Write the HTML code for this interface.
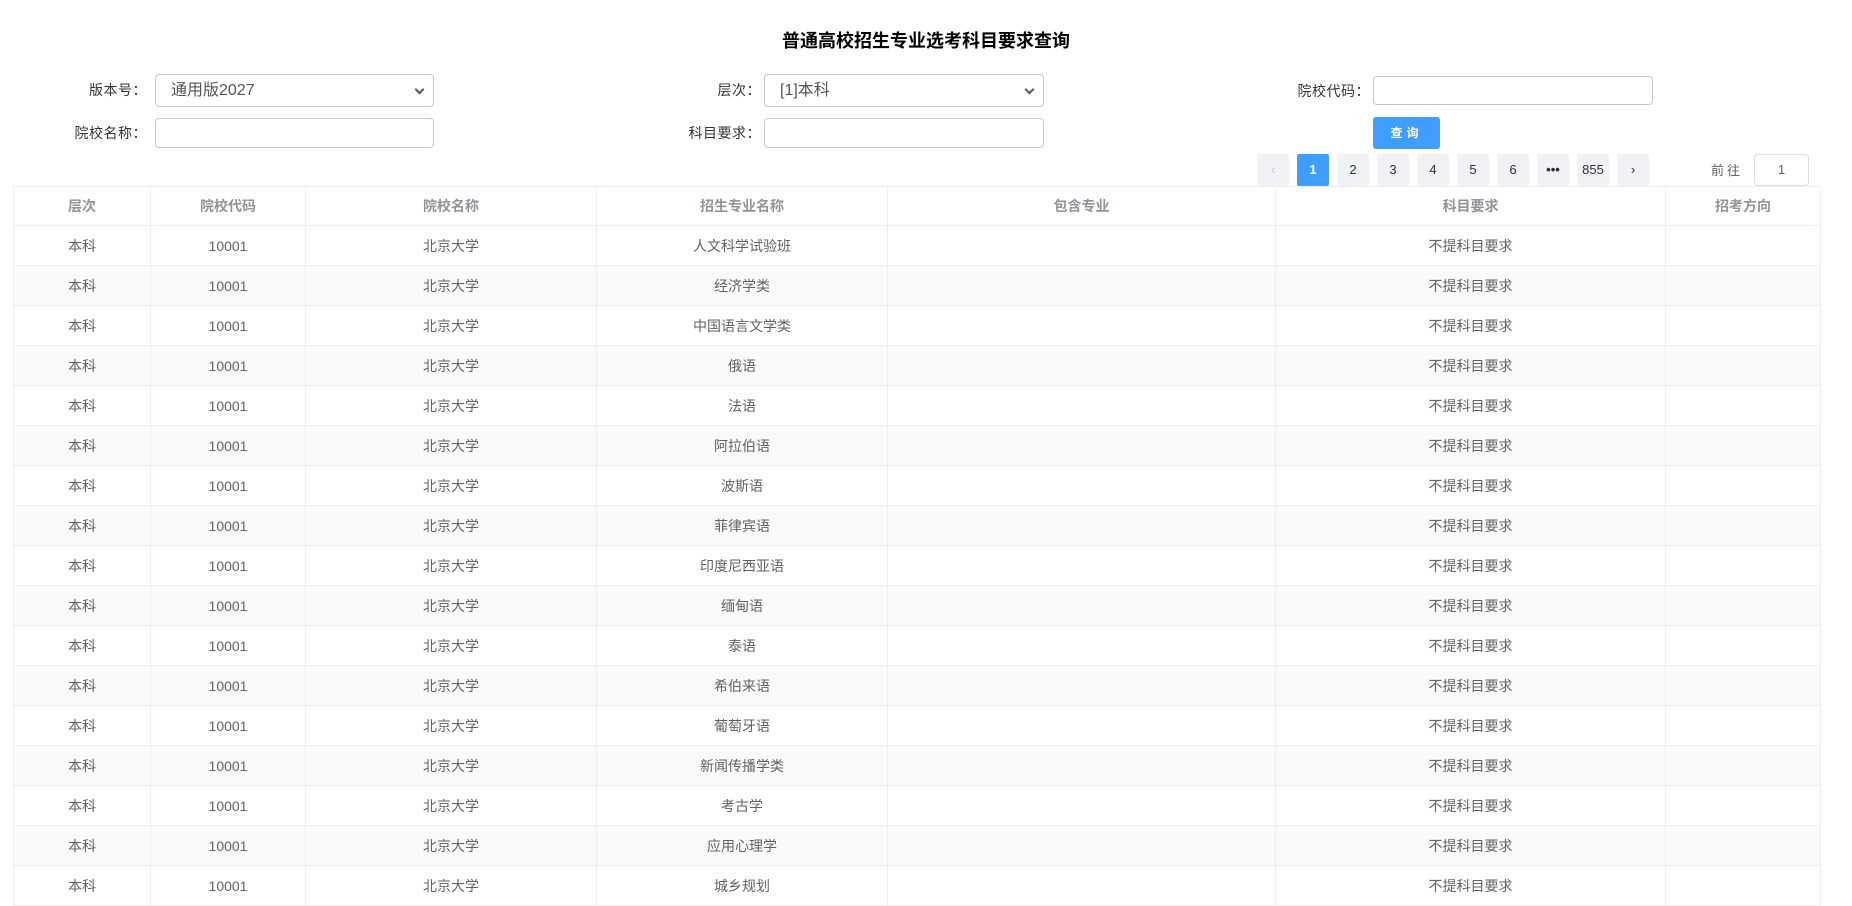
<!DOCTYPE html>
<html><head><meta charset="utf-8"><style>
*{box-sizing:border-box;margin:0;padding:0}
body{width:1852px;height:890px;overflow:hidden;background:#fff;font-family:"Liberation Sans","Noto Sans CJK SC",sans-serif;position:relative}
.a{position:absolute}
.title{left:782px;top:29px;font-size:18px;font-weight:bold;color:#000;white-space:nowrap;line-height:24px}
.lab{font-size:14px;color:#333;text-align:right;width:120px;line-height:20px;letter-spacing:0.5px}
.box{border:1px solid #c8c8c8;border-radius:4px;background:#fff}
.sel{font-size:16px;color:#555;padding-left:15px;line-height:31px}
.sel:after{content:"";position:absolute;right:10px;top:11px;width:5px;height:5px;border-right:2px solid #555;border-bottom:2px solid #555;transform:rotate(45deg)}
.btn{background:#409eff;color:#fff;font-size:12px;font-weight:bold;border-radius:3px;text-align:center;line-height:32px;letter-spacing:4px}
.pg{top:154px;width:32px;height:32px;background:#f0f2f5;border-radius:2px;font-size:13px;color:#303133;text-align:center;line-height:32px}
table{position:absolute;left:13px;top:186px;border-collapse:collapse;table-layout:fixed;width:1807px}
td,th{border:1px solid #ebeef5;height:40px;text-align:center;font-size:14px;color:#606266;font-weight:normal}
th{color:#909399;font-weight:bold;height:39px}
tr:nth-child(odd) td{background:#fafafa}
</style></head><body>
<div class="a title">普通高校招生专业选考科目要求查询</div>
<div class="a lab" style="left:27px;top:80px">版本号：</div>
<div class="a box sel" style="left:155px;top:74px;width:279px;height:33px">通用版2027</div>
<div class="a lab" style="left:27px;top:123px">院校名称：</div>
<div class="a box" style="left:155px;top:118px;width:279px;height:30px"></div>
<div class="a lab" style="left:641px;top:80px">层次：</div>
<div class="a box sel" style="left:764px;top:74px;width:280px;height:33px">[1]本科</div>
<div class="a lab" style="left:641px;top:123px">科目要求：</div>
<div class="a box" style="left:764px;top:118px;width:280px;height:30px"></div>
<div class="a lab" style="left:1250px;top:81px">院校代码：</div>
<div class="a box" style="left:1373px;top:76px;width:280px;height:29px"></div>
<div class="a btn" style="left:1373px;top:117px;width:67px;height:32px">查询</div>
<div class="a pg" style="left:1257px;color:#c0c4cc">&lsaquo;</div>
<div class="a pg" style="left:1297px;background:#409eff;color:#fff;font-weight:bold">1</div>
<div class="a pg" style="left:1337px">2</div>
<div class="a pg" style="left:1377px">3</div>
<div class="a pg" style="left:1417px">4</div>
<div class="a pg" style="left:1457px">5</div>
<div class="a pg" style="left:1497px">6</div>
<div class="a pg" style="left:1537px;font-weight:bold">•••</div>
<div class="a pg" style="left:1577px">855</div>
<div class="a pg" style="left:1617px">&rsaquo;</div>
<div class="a" style="left:1711px;top:160px;font-size:13px;color:#606266;letter-spacing:3px">前往</div>
<div class="a box" style="left:1754px;top:154px;width:55px;height:32px;border-color:#dcdfe6;text-align:center;line-height:30px;font-size:13px;color:#606266">1</div>
<table>
<colgroup><col style="width:137px"><col style="width:155px"><col style="width:291px"><col style="width:291px"><col style="width:388px"><col style="width:390px"><col style="width:155px"></colgroup>
<tr><th>层次</th><th>院校代码</th><th>院校名称</th><th>招生专业名称</th><th>包含专业</th><th>科目要求</th><th>招考方向</th></tr>
<tr><td>本科</td><td>10001</td><td>北京大学</td><td>人文科学试验班</td><td></td><td>不提科目要求</td><td></td></tr>
<tr><td>本科</td><td>10001</td><td>北京大学</td><td>经济学类</td><td></td><td>不提科目要求</td><td></td></tr>
<tr><td>本科</td><td>10001</td><td>北京大学</td><td>中国语言文学类</td><td></td><td>不提科目要求</td><td></td></tr>
<tr><td>本科</td><td>10001</td><td>北京大学</td><td>俄语</td><td></td><td>不提科目要求</td><td></td></tr>
<tr><td>本科</td><td>10001</td><td>北京大学</td><td>法语</td><td></td><td>不提科目要求</td><td></td></tr>
<tr><td>本科</td><td>10001</td><td>北京大学</td><td>阿拉伯语</td><td></td><td>不提科目要求</td><td></td></tr>
<tr><td>本科</td><td>10001</td><td>北京大学</td><td>波斯语</td><td></td><td>不提科目要求</td><td></td></tr>
<tr><td>本科</td><td>10001</td><td>北京大学</td><td>菲律宾语</td><td></td><td>不提科目要求</td><td></td></tr>
<tr><td>本科</td><td>10001</td><td>北京大学</td><td>印度尼西亚语</td><td></td><td>不提科目要求</td><td></td></tr>
<tr><td>本科</td><td>10001</td><td>北京大学</td><td>缅甸语</td><td></td><td>不提科目要求</td><td></td></tr>
<tr><td>本科</td><td>10001</td><td>北京大学</td><td>泰语</td><td></td><td>不提科目要求</td><td></td></tr>
<tr><td>本科</td><td>10001</td><td>北京大学</td><td>希伯来语</td><td></td><td>不提科目要求</td><td></td></tr>
<tr><td>本科</td><td>10001</td><td>北京大学</td><td>葡萄牙语</td><td></td><td>不提科目要求</td><td></td></tr>
<tr><td>本科</td><td>10001</td><td>北京大学</td><td>新闻传播学类</td><td></td><td>不提科目要求</td><td></td></tr>
<tr><td>本科</td><td>10001</td><td>北京大学</td><td>考古学</td><td></td><td>不提科目要求</td><td></td></tr>
<tr><td>本科</td><td>10001</td><td>北京大学</td><td>应用心理学</td><td></td><td>不提科目要求</td><td></td></tr>
<tr><td>本科</td><td>10001</td><td>北京大学</td><td>城乡规划</td><td></td><td>不提科目要求</td><td></td></tr>
</table>
</body></html>
